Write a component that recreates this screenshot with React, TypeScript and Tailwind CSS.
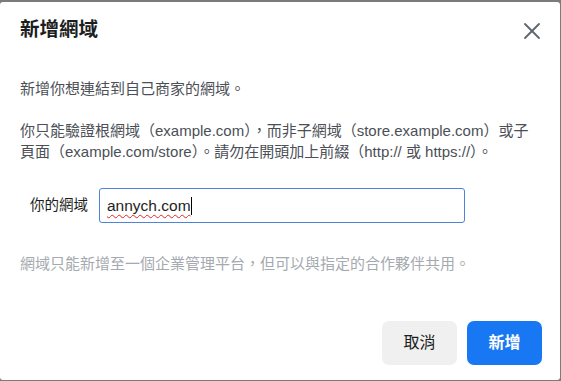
import { X } from 'lucide-react'

const font = 'font-["Liberation_Sans","Noto_Sans_CJK_TC",sans-serif]'

export default function App() {
    return (
        <div
            lang="zh-TW"
            className={`w-[561px] h-[381px] bg-[#7b7b7b] pt-[2px] pb-[1px] pr-[1px] ${font}`}
        >
            <div className="flex flex-col h-full bg-white rounded-[3px]">
                {/* header */}
                <div className="flex items-center justify-between h-[56px] pl-[20px] pr-[14px]">
                    <h1 className="text-[19.5px] font-bold text-[#1c1e21]">新增網域</h1>
                    <button className="text-[#606770] mt-[2px]">
                        <X size={28} strokeWidth={1.6} />
                    </button>
                </div>

                {/* body */}
                <div className="px-[20px] text-[15px] leading-[21px] text-[#4b4f56]">
                    <p className="mt-[20px]">新增你想連結到自己商家的網域。</p>
                    <p className="mt-[21px]">
                        你只能驗證根網域（example.com），而非子網域（store.example.com）或子頁面（example.com/store）。請勿在開頭加上前綴（http:// 或 https://）。
                    </p>

                    <div className="flex items-center mt-[26px] pl-[10px]">
                        <label className="w-[69px] text-[14.5px] text-[#1c1e21]">你的網域</label>
                        <div className="flex items-center w-[366px] h-[35px] border border-[#4c84dc] rounded-[3px] px-[7px]">
                            <span className="text-[15.5px] text-[#1c1e21] underline decoration-wavy decoration-[#e0262a] decoration-1 underline-offset-[3px]">
                                annych.com
                            </span>
                            <span className="w-[1px] h-[18px] bg-black" />
                        </div>
                    </div>

                    <p className="mt-[30px] text-[#a5a9b0]">
                        網域只能新增至一個企業管理平台，但可以與指定的合作夥伴共用。
                    </p>
                </div>

                {/* footer */}
                <div className="flex justify-end gap-[10px] mt-auto mb-[15px] pr-[18px]">
                    <button className="w-[75px] h-[44px] rounded-[7px] bg-[#f0f0f0] text-[16px] text-[#1c1e21]">
                        取消
                    </button>
                    <button className="w-[75px] h-[44px] rounded-[7px] bg-[#1877f2] text-[16px] font-bold text-white">
                        新增
                    </button>
                </div>
            </div>
        </div>
    )
}
